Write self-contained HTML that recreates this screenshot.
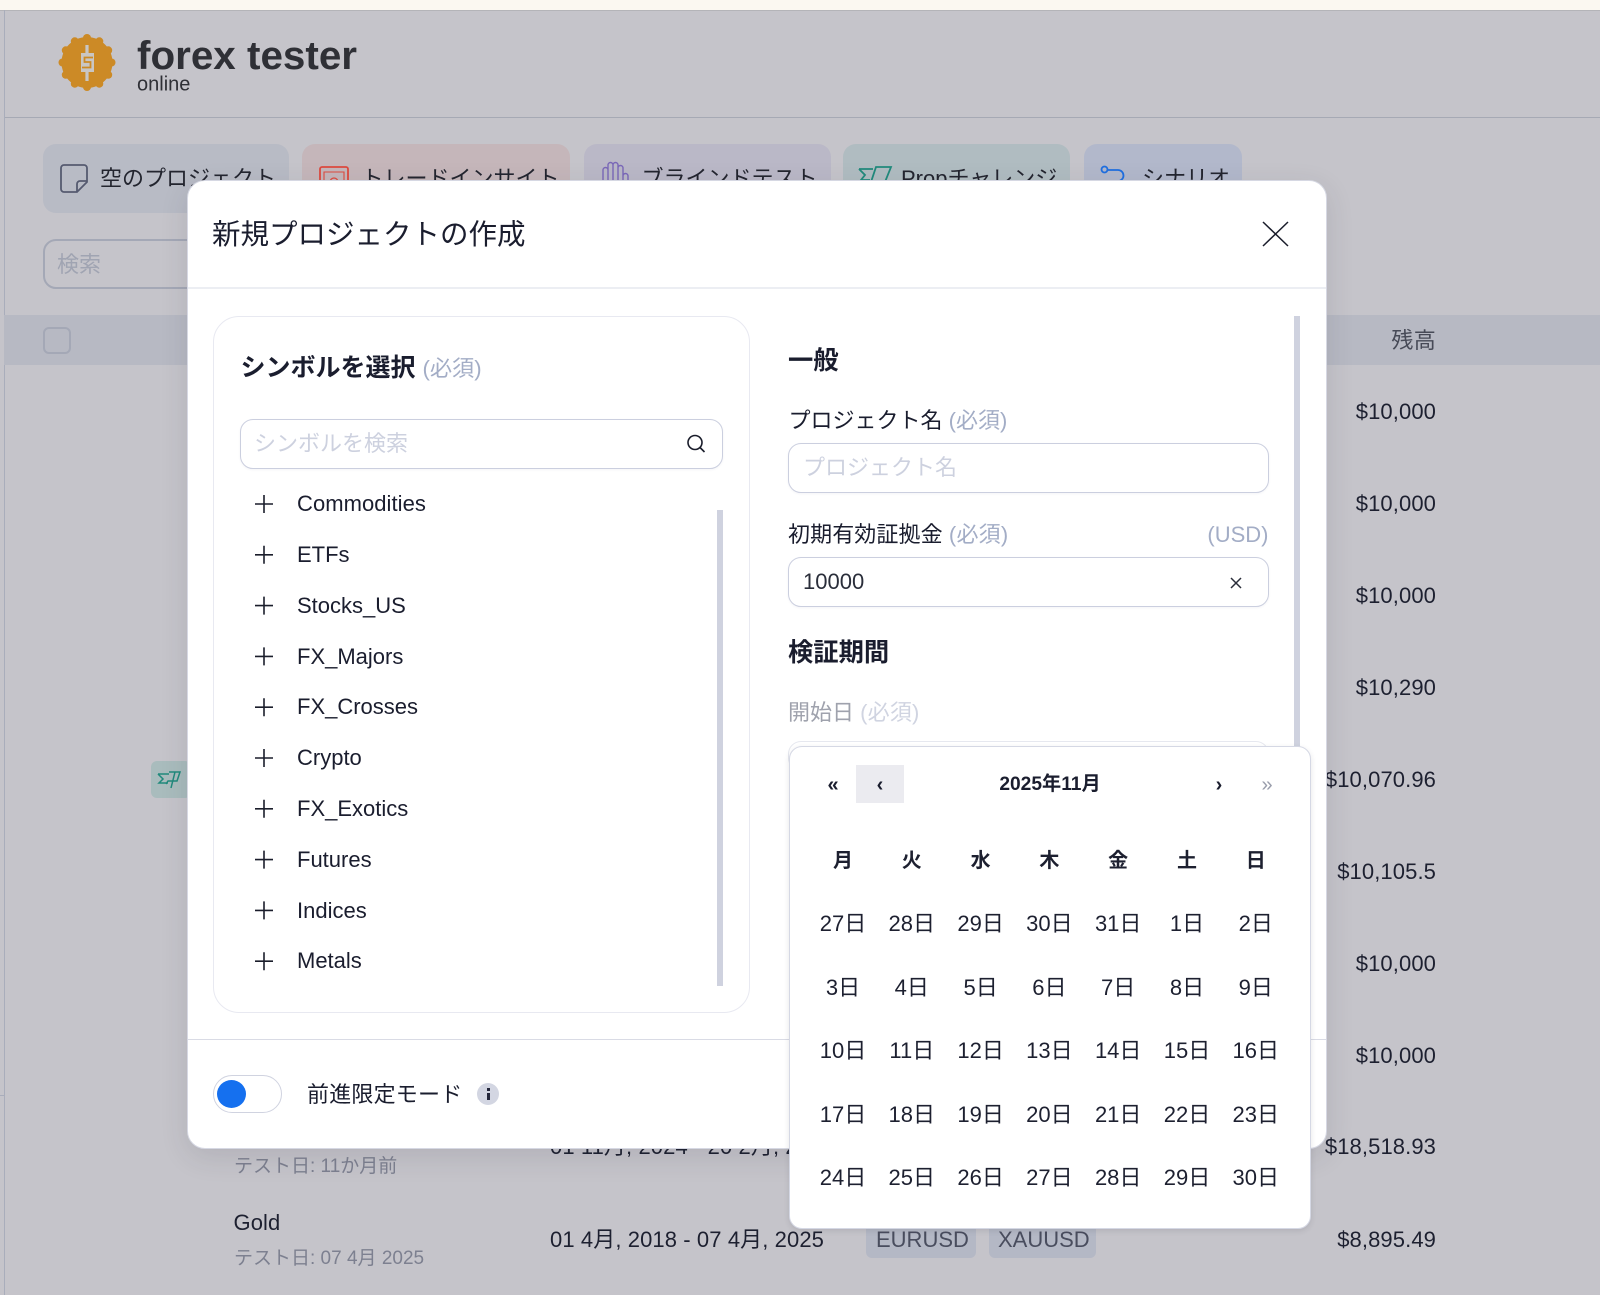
<!DOCTYPE html>
<html lang="ja"><head><meta charset="utf-8"><title>forex tester</title>
<style>
html,body{margin:0;padding:0}
body{width:1600px;height:1295px;position:relative;overflow:hidden;background:#c5c4ca;font-family:"Liberation Sans","Noto Sans CJK JP",sans-serif;font-size:22px;color:#1a1d2e}
.a{position:absolute;box-sizing:border-box}
.t{position:absolute;white-space:nowrap;line-height:30px;height:30px}
.r{text-align:right}
.req{color:#a3adc6}
.inp{position:absolute;box-sizing:border-box;background:#fff;border:1.8px solid #cbcfdf;border-radius:13px;box-shadow:0 1px 2px rgba(30,40,90,.05)}
.tab{position:absolute;top:144px;height:69px;border-radius:13px}
.bg{color:#23252f}
.m{color:#1d2030;letter-spacing:.1px}
.b{font-weight:700}
#cal{position:absolute;left:808.6px;top:829px;display:grid;grid-template-columns:repeat(7,68.8px);grid-auto-rows:63.4px;text-align:center;line-height:63.4px;color:#1d2030}
#cal b{font-size:20px;line-height:65px}
</style></head><body>
<div class="a" style="left:0;top:0;width:1600px;height:10px;background:#fbf8f1"></div>
<div class="a" style="left:0;top:10px;width:1600px;height:1px;background:#b4b4b8"></div>
<div class="a" style="left:3.5px;top:10px;width:1.5px;height:1285px;background:#a9adbb"></div>
<div class="a" style="left:0;top:1095px;width:4px;height:1px;background:#a9adbb"></div>
<div class="a" style="left:5px;top:116.5px;width:1595px;height:1.5px;background:#a6a9b4"></div>

<svg class="a" style="left:50px;top:25px" width="330" height="75" viewBox="50 25 330 75">
<g fill="#cc8a26"><circle cx="87" cy="62.5" r="25.5"/>
<circle cx="87" cy="38" r="4"/><circle cx="99.3" cy="41.3" r="4"/><circle cx="108.2" cy="50.3" r="4"/><circle cx="111.5" cy="62.5" r="4"/><circle cx="108.2" cy="74.8" r="4"/><circle cx="99.3" cy="83.7" r="4"/><circle cx="87" cy="87" r="4"/><circle cx="74.8" cy="83.7" r="4"/><circle cx="65.8" cy="74.8" r="4"/><circle cx="62.5" cy="62.5" r="4"/><circle cx="65.8" cy="50.3" r="4"/><circle cx="74.8" cy="41.3" r="4"/></g>
<rect x="85.4" y="45" width="3.2" height="36" fill="#c9c6c4"/><rect x="81" y="53" width="13" height="19" fill="#c9c6c4"/>
<path d="M93 57.5h-8.5v4.5h6v5.5h-8.5" fill="none" stroke="#cc8a26" stroke-width="1.8"/>
<text x="137" y="69" font-family="Liberation Sans" font-weight="700" font-size="40" fill="#2f3036" textLength="220" lengthAdjust="spacingAndGlyphs">forex tester</text>
<text x="137" y="90.5" font-family="Liberation Sans" font-size="20" fill="#2f3036">online</text>
</svg>

<div class="tab" style="left:43px;width:246px;background:#b8bbc5"></div>
<div class="tab" style="left:302px;width:268px;background:#c5b6ba"></div>
<div class="tab" style="left:584px;width:247px;background:#bab8c7"></div>
<div class="tab" style="left:843px;width:227px;background:#b0bcc1"></div>
<div class="tab" style="left:1084px;width:158px;background:#b2b8cb"></div>
<svg class="a" style="left:0;top:140px" width="1300" height="60" viewBox="0 140 1300 60" fill="none" stroke-width="1.8">
<path d="M64 165h20a3 3 0 0 1 3 3v14l-10 10H64a3 3 0 0 1-3-3V168a3 3 0 0 1 3-3z" stroke="#555a70"/><path d="M87 181h-7a3 3 0 0 0-3 3v8" stroke="#555a70"/>
<rect x="320" y="167" width="28" height="24" rx="2" stroke="#dd4a3f"/><path d="M324 172h20v14h-20z" stroke="#dd4a3f" stroke-width="1.1"/><path d="M330 182a4 4 0 0 1 8 0" stroke="#dd4a3f" stroke-width="1.3"/>
<path d="M603 184v-14a2.5 2.5 0 0 1 5 0v14M608 170v-5a2.5 2.5 0 0 1 5 0v19M613 165a2.5 2.5 0 0 1 5 0v19M618 168a2.5 2.5 0 0 1 5 0v16M623 176a2.5 2.5 0 0 1 5 0v8" stroke="#7a68b8" stroke-width="1.4"/>
<path d="M876 167h15l-6 15h-14zM859 169h14M859 169l6 6-4 5h9" stroke="#218a7c"/>
<circle cx="1104.5" cy="169.5" r="3" stroke="#1f6fe0"/><path d="M1108 170h10a5.5 5.5 0 0 1 0 11h-4" stroke="#1f6fe0"/>
</svg>
<div class="t bg" style="left:100px;top:163.5px">空のプロジェクト</div>
<div class="t bg" style="left:361.5px;top:163.5px">トレードインサイト</div>
<div class="t bg" style="left:641.5px;top:163.5px">ブラインドテスト</div>
<div class="t bg" style="left:901px;top:163.5px">Propチャレンジ</div>
<div class="t bg" style="left:1142px;top:163.5px">シナリオ</div>

<div class="a" style="left:43px;top:239px;width:300px;height:50px;border:2px solid #a4a8b6;border-radius:13px"></div>
<div class="t" style="left:57px;top:250px;color:#a0a4b2">検索</div>
<div class="a" style="left:4px;top:315px;width:1596px;height:50px;background:#b7b9c3"></div>
<div class="a" style="left:43px;top:327px;width:28px;height:27px;border:2px solid #a4a8b6;border-radius:6px"></div>
<div class="t r" style="right:164px;top:326px;color:#474a57;letter-spacing:.3px">残高</div>

<div class="a" style="left:151px;top:761px;width:40px;height:37px;border-radius:6px;background:#a9bcbd"></div>
<svg class="a" style="left:157px;top:770px" width="26" height="22" viewBox="0 0 26 22" fill="none" stroke="#218a7c" stroke-width="1.5"><path d="M12 2h11l-3 9h-9l-2 3M1 4h11M1 4l5 5-4 4h9M18 2l-4 16"/></svg>

<div class="t r m" style="right:164px;top:397px">$10,000</div>
<div class="t r m" style="right:164px;top:489px">$10,000</div>
<div class="t r m" style="right:164px;top:581px">$10,000</div>
<div class="t r m" style="right:164px;top:673px">$10,290</div>
<div class="t r m" style="right:164px;top:765px">$10,070.96</div>
<div class="t r m" style="right:164px;top:857px">$10,105.5</div>
<div class="t r m" style="right:164px;top:948.5px">$10,000</div>
<div class="t r m" style="right:164px;top:1040.5px">$10,000</div>
<div class="t r m" style="right:164px;top:1132px">$18,518.93</div>
<div class="t r m" style="right:164px;top:1224.5px">$8,895.49</div>

<div class="t m" style="left:550px;top:1131.5px">01 11月, 2024 - 20 2月, 2025</div>
<div class="t" style="left:234px;top:1152px;font-size:19px;color:#7d8090">テスト日: 11か月前</div>
<div class="t m" style="left:233.5px;top:1208px">Gold</div>
<div class="t" style="left:234px;top:1244px;font-size:19px;color:#7d8090">テスト日: 07 4月 2025</div>
<div class="t m" style="left:550px;top:1224.5px">01 4月, 2018 - 07 4月, 2025</div>
<div class="a" style="left:866px;top:1222px;width:110px;height:36px;border-radius:6px;background:#b4b8c5"></div>
<div class="a" style="left:989px;top:1222px;width:107px;height:36px;border-radius:6px;background:#b4b8c5"></div>
<div class="t" style="left:876px;top:1224.5px;color:#494d5e">EURUSD</div>
<div class="t" style="left:998px;top:1224.5px;color:#494d5e">XAUUSD</div>

<!-- modal -->
<div class="a" style="left:186.5px;top:180px;width:1140px;height:969px;background:#fff;border-radius:18px;border:1px solid #d6d8e3;box-shadow:0 8px 28px rgba(40,40,60,.12)"></div>
<div class="t" style="left:212px;top:219.5px;font-size:28.5px">新規プロジェクトの作成</div>
<svg class="a" style="left:1261px;top:220px" width="29" height="28" fill="none" stroke="#1a1d2b" stroke-width="1.5"><path d="M2 2l25 24M27 2L2 26"/></svg>
<div class="a" style="left:188px;top:287px;width:1138px;height:1.5px;background:#eceef3"></div>
<div class="a" style="left:213px;top:316px;width:537px;height:697px;border:1.5px solid #e8e9f1;border-radius:26px"></div>
<div class="t b" style="left:240.5px;top:353px;font-size:25px">シンボルを選択 <span class="req" style="font-weight:400;font-size:22.2px">(必須)</span></div>
<div class="inp" style="left:240px;top:419px;width:483px;height:50px"></div>
<div class="t" style="left:254px;top:429px;color:#cdd1df">シンボルを検索</div>
<svg class="a" style="left:685px;top:433px" width="22" height="22" fill="none" stroke="#1a1d2b" stroke-width="1.6"><circle cx="10" cy="9.5" r="7"/><path d="M15 14.5l4.5 4.5"/></svg>
<div class="a" style="left:717px;top:510px;width:6px;height:476px;background:#cfd2df"></div>
<div class="a" style="left:1294px;top:316px;width:6px;height:440px;background:#cfd2df"></div>

<svg class="a" style="left:255px;top:495px" width="18" height="480" fill="none" stroke="#1a1d2b" stroke-width="1.6">
<path d="M0 9h18M9 0v18M0 59.8h18M9 50.8v18M0 110.6h18M9 101.6v18M0 161.4h18M9 152.4v18M0 212.2h18M9 203.2v18M0 263h18M9 254v18M0 313.8h18M9 304.8v18M0 364.6h18M9 355.6v18M0 415.4h18M9 406.4v18M0 466.2h18M9 457.2v18"/></svg>
<div class="t" style="left:297px;top:489px;letter-spacing:.05px">Commodities</div>
<div class="t" style="left:297px;top:539.8px">ETFs</div>
<div class="t" style="left:297px;top:590.6px">Stocks_US</div>
<div class="t" style="left:297px;top:641.8px">FX_Majors</div>
<div class="t" style="left:297px;top:692.2px">FX_Crosses</div>
<div class="t" style="left:297px;top:743px">Crypto</div>
<div class="t" style="left:297px;top:793.8px">FX_Exotics</div>
<div class="t" style="left:297px;top:844.6px">Futures</div>
<div class="t" style="left:297px;top:895.6px">Indices</div>
<div class="t" style="left:297px;top:946.2px">Metals</div>

<div class="t b" style="left:788px;top:346px;font-size:25.3px">一般</div>
<div class="t" style="left:788.5px;top:406px">プロジェクト名 <span class="req">(必須)</span></div>
<div class="inp" style="left:788px;top:443px;width:480.5px;height:50px"></div>
<div class="t" style="left:803px;top:453px;color:#cdd1df">プロジェクト名</div>
<div class="t" style="left:788px;top:520px;letter-spacing:.1px">初期有効証拠金 <span class="req" style="letter-spacing:.2px">(必須)</span></div>
<div class="t r req" style="right:331.5px;top:520px">(USD)</div>
<div class="inp" style="left:788px;top:557px;width:480.5px;height:50px"></div>
<div class="t" style="left:803px;top:567px;color:#2a2e3a">10000</div>
<svg class="a" style="left:1230px;top:577px" width="12" height="12" fill="none" stroke="#2a2e3a" stroke-width="1.5"><path d="M1 1l10 10M11 1L1 11"/></svg>
<div class="t b" style="left:788px;top:638px;font-size:25.3px">検証期間</div>
<div class="t" style="left:788px;top:698px;color:#9fa2ad">開始日 <span style="color:#d0d4e1;letter-spacing:.2px">(必須)</span></div>
<div class="a" style="left:788px;top:741px;width:480.5px;height:30px;border:1.5px solid #e6e8ef;border-radius:13px"></div>

<div class="a" style="left:1311px;top:1039px;width:15px;height:1px;background:#d9dbe5"></div>
<div class="a" style="left:188px;top:1039px;width:602px;height:1px;background:#d9dbe5"></div>
<div class="a" style="left:213px;top:1075px;width:69px;height:38px;border:1.5px solid #d0d3e0;border-radius:19px;background:#fff"></div>
<div class="a" style="left:217px;top:1080px;width:29px;height:28px;border-radius:50%;background:#1570ef"></div>
<div class="t" style="left:307px;top:1080px;letter-spacing:.2px">前進限定モード</div>
<div class="a" style="left:477px;top:1083px;width:22px;height:22px;border-radius:50%;background:#d3d6e2"></div>
<div class="a" style="left:487px;top:1088px;width:2.5px;height:3px;background:#23263a"></div>
<div class="a" style="left:487px;top:1093px;width:2.5px;height:7px;background:#23263a"></div>

<!-- calendar -->
<div class="a" style="left:789px;top:745.5px;width:522px;height:483px;background:#fff;border:1.5px solid #d5d8e4;border-radius:13px;box-shadow:0 2px 6px rgba(40,40,60,.12)"></div>
<div class="a" style="left:856px;top:765px;width:48px;height:38px;background:#ebebf0"></div>
<div class="t b" style="left:823px;top:770px;width:20px;text-align:center;font-size:20px">«</div>
<div class="t b" style="left:870px;top:770px;width:20px;text-align:center;font-size:20px">‹</div>
<div class="t b" style="left:950px;top:770px;width:200px;text-align:center;font-size:19.2px">2025年11月</div>
<div class="t b" style="left:1209px;top:770px;width:20px;text-align:center;font-size:20px">›</div>
<div class="t" style="left:1257px;top:770px;width:20px;text-align:center;color:#9a9eac;font-size:20px">»</div>
<div id="cal">
<b>月</b><b>火</b><b>水</b><b>木</b><b>金</b><b>土</b><b>日</b>
<span>27日</span><span>28日</span><span>29日</span><span>30日</span><span>31日</span><span>1日</span><span>2日</span>
<span>3日</span><span>4日</span><span>5日</span><span>6日</span><span>7日</span><span>8日</span><span>9日</span>
<span>10日</span><span>11日</span><span>12日</span><span>13日</span><span>14日</span><span>15日</span><span>16日</span>
<span>17日</span><span>18日</span><span>19日</span><span>20日</span><span>21日</span><span>22日</span><span>23日</span>
<span>24日</span><span>25日</span><span>26日</span><span>27日</span><span>28日</span><span>29日</span><span>30日</span>
</div>
</body></html>
